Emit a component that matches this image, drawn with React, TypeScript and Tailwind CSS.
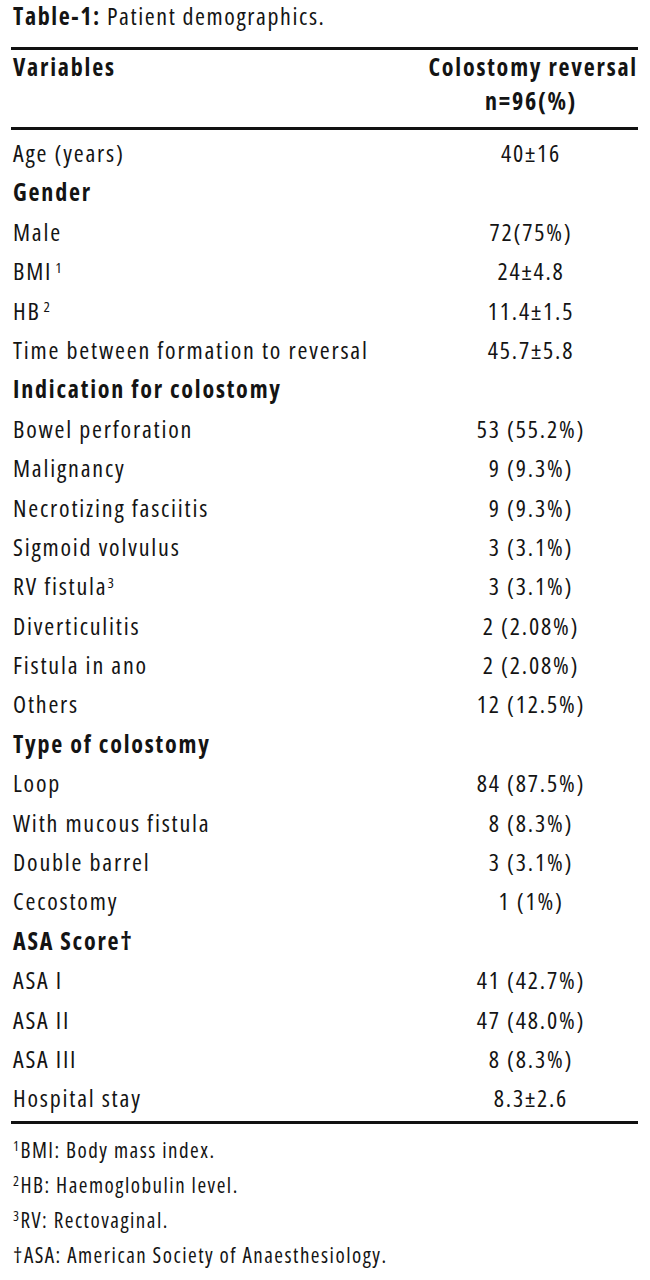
import React from 'react';

type Row = {
  label: React.ReactNode;
  value?: string;
  heading?: boolean;
};

const rows: Row[] = [
  { label: 'Age (years)', value: '40±16' },
  { label: 'Gender', heading: true },
  { label: 'Male', value: '72(75%)' },
  { label: <>BMI<sup className="ml-[3px] text-[15px]">1</sup></>, value: '24±4.8' },
  { label: <>HB<sup className="ml-[3px] text-[15px]">2</sup></>, value: '11.4±1.5' },
  { label: 'Time between formation to reversal', value: '45.7±5.8' },
  { label: 'Indication for colostomy', heading: true },
  { label: 'Bowel perforation', value: '53 (55.2%)' },
  { label: 'Malignancy', value: '9 (9.3%)' },
  { label: 'Necrotizing fasciitis', value: '9 (9.3%)' },
  { label: 'Sigmoid volvulus', value: '3 (3.1%)' },
  { label: <>RV fistula<sup className="text-[15px]">3</sup></>, value: '3 (3.1%)' },
  { label: 'Diverticulitis', value: '2 (2.08%)' },
  { label: 'Fistula in ano', value: '2 (2.08%)' },
  { label: 'Others', value: '12 (12.5%)' },
  { label: 'Type of colostomy', heading: true },
  { label: 'Loop', value: '84 (87.5%)' },
  { label: 'With mucous fistula', value: '8 (8.3%)' },
  { label: 'Double barrel', value: '3 (3.1%)' },
  { label: 'Cecostomy', value: '1 (1%)' },
  { label: 'ASA Score†', heading: true },
  { label: 'ASA I', value: '41 (42.7%)' },
  { label: 'ASA II', value: '47 (48.0%)' },
  { label: 'ASA III', value: '8 (8.3%)' },
  { label: 'Hospital stay', value: '8.3±2.6' },
];

const notes: React.ReactNode[] = [
  <><sup className="text-[14px]">1</sup>BMI: Body mass index.</>,
  <><sup className="text-[14px]">2</sup>HB: Haemoglobulin level.</>,
  <><sup className="text-[14px]">3</sup>RV: Rectovaginal.</>,
  <>†ASA: American Society of Anaesthesiology.</>,
];

export default function App() {
  return (
    <div className="min-h-[1280px] bg-white pl-[11px] pr-[12px] font-['Open_Sans',sans-serif] font-stretch-condensed text-[#141414]">
      <p className="pl-[2px] text-[24px] leading-[32px] tracking-[1.6px]">
        <span className="font-bold">Table-1:</span> Patient demographics.
      </p>

      <div className="mt-[15px] border-t-[3px] border-b-[3px] border-[#111]">
        {/* header */}
        <div className="flex pb-[9px] text-[24px] font-bold leading-[34px] tracking-[1.8px]">
          <div className="flex-1 pl-[2px]">Variables</div>
          <div className="w-[214px] text-center">
            <div className="whitespace-nowrap text-right">Colostomy reversal</div>
            <div>n=96(%)</div>
          </div>
        </div>
      </div>

      <div className="pt-[3px] pb-[3px]">
        {rows.map((r, i) => (
          <div key={i} className="flex h-[39.4px] items-center text-[24px] leading-[39.4px] tracking-[1.8px]">
            <div className={`flex-1 pl-[2px] ${r.heading ? 'font-bold' : ''}`}>{r.label}</div>
            <div className="w-[214px] text-center">{r.value}</div>
          </div>
        ))}
      </div>

      <div className="border-t-[3px] border-[#111] pt-[9px]">
        {notes.map((n, i) => (
          <p key={i} className="pl-[2px] text-[21px] leading-[35px] tracking-[1.5px]">
            {n}
          </p>
        ))}
      </div>
    </div>
  );
}
